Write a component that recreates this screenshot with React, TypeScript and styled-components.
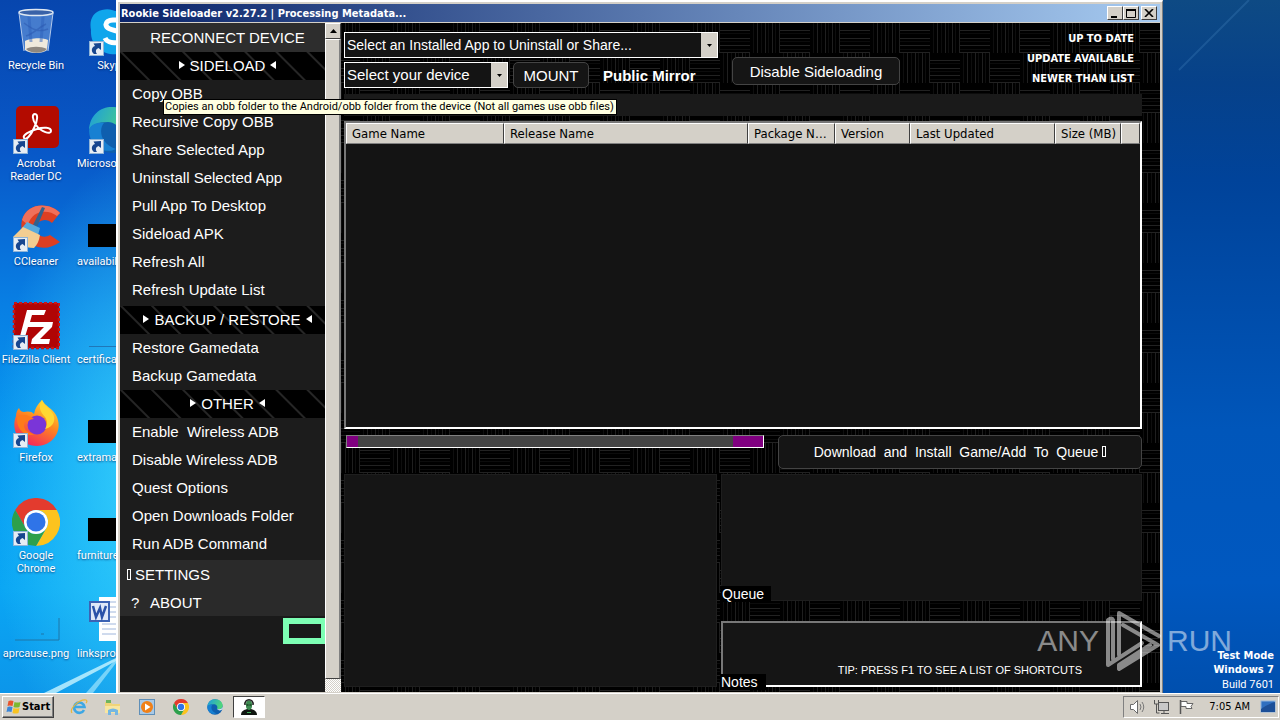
import React from 'react';
import styled, { createGlobalStyle } from 'styled-components';

const UI = '"DejaVu Sans Condensed", "DejaVu Sans", sans-serif';
const SMALL = 'Roboto, "Liberation Sans", sans-serif';
const SANS = '"Liberation Sans", Arial, sans-serif';
const FACE = '#d4d0c8';

const Global = createGlobalStyle`
  *, *::before, *::after { box-sizing: border-box; }
  body { margin: 0; }
  button, select, input { font: inherit; color: inherit; margin: 0; padding: 0; border-radius: 0; }
`;

/* ---------- desktop ---------- */

const Screen = styled.div`
  display: flex;
  flex-direction: column;
  min-height: 100vh;
  font-family: ${UI};
  font-size: 11px;
  color: #fff;
`;

const Desktop = styled.div`
  flex: 1;
  display: grid;
  grid-template-columns: 116px minmax(0, 1fr) 117px;
  position: relative;
`;

const LeftWall = styled.div`
  position: relative;
  overflow: hidden;
  background:
    radial-gradient(ellipse 160px 330px at 150px 480px, rgba(70, 225, 255, 0.75), rgba(40, 190, 255, 0) 100%),
    linear-gradient(#0746ae 0, #0858c8 22%, #087fe4 44%, #079cf2 66%, #0aa6f4 85%, #0c96ea 100%);
`;

const RightWall = styled.div`
  position: relative;
  display: flex;
  flex-direction: column;
  background: linear-gradient(#0e4a84 0, #06418a 12%, #00439a 26%, #0056ba 62%, #0058c0 84%, #004fae 100%);
`;

const Rays = styled.svg`
  position: absolute;
  left: 0;
  bottom: 0;
`;

const Shine = styled.svg`
  position: absolute;
  left: 0;
  top: 0;
`;

const IconGrid = styled.div`
  position: relative;
  display: grid;
  grid-template-columns: 72px 72px;
  column-gap: 4px;
  grid-auto-rows: 98px;
  grid-auto-flow: row;
`;

const DesktopItem = styled.a`
  display: flex;
  flex-direction: column;
  align-items: center;
  padding-top: 8px;
  color: #fff;
  text-decoration: none;
`;

const Picture = styled.span`
  position: relative;
  width: 48px;
  height: 48px;
  margin-bottom: 3px;
`;

const Badge = styled.svg`
  position: absolute;
  left: 1px;
  bottom: 0;
`;

const ItemLabel = styled.span<{ $start?: boolean }>`
  width: ${(p) => (p.$start ? '70px' : '72px')};
  text-align: ${(p) => (p.$start ? 'left' : 'center')};
  white-space: ${(p) => (p.$start ? 'nowrap' : 'normal')};
  font-size: 11px;
  line-height: 13px;
  font-family: ${SMALL};
  text-shadow: 0 1px 2px rgba(0, 30, 90, 0.7);
`;

const BuildInfo = styled.div`
  position: relative;
  margin-top: auto;
  padding: 0 6px 0 0;
  text-align: right;
`;

const BuildLine = styled.div<{ $bold?: boolean }>`
  font-family: ${(p) => (p.$bold ? UI : SMALL)};
  font-weight: ${(p) => (p.$bold ? 700 : 400)};
  line-height: ${(p) => (p.$bold ? '14px' : '16px')};
`;

const Watermark = styled.div`
  position: absolute;
  right: 48px;
  bottom: 20px;
  display: flex;
  align-items: center;
  gap: 5px;
  color: #fff;
  opacity: 0.5;
  font-family: ${SANS};
  font-size: 30px;
  line-height: 64px;
  pointer-events: none;
`;

/* ---------- window ---------- */

const Window = styled.div`
  position: relative;
  display: flex;
  flex-direction: column;
  padding: 2px 2px 1px 2px;
  border: solid;
  border-width: 2px 1px 0 2px;
  border-color: #fff #808080 #808080 #fff;
  background: ${FACE};
`;

const TitleBar = styled.div`
  display: flex;
  align-items: center;
  height: 18px;
  margin-bottom: 1px;
  padding: 0 3px 0 1px;
  background: linear-gradient(90deg, #0a246a, #a6caf0);
  font-weight: 700;
`;

const TitleText = styled.span`
  flex: 1;
  white-space: nowrap;
`;

const TitleButton = styled.button<{ $gap?: boolean }>`
  width: 16px;
  height: 14px;
  margin-left: ${(p) => (p.$gap ? '2px' : '0')};
  border: 1px solid;
  border-color: #fff #404040 #404040 #fff;
  background: ${FACE};
  display: grid;
  place-items: center;
`;

const Client = styled.div`
  flex: 1;
  display: flex;
  background: #000;
`;

const Sidebar = styled.nav`
  width: 205px;
  display: flex;
  flex-direction: column;
  background: #1a1a1a;
  font-family: ${SANS};
  font-size: 15px;
`;

const Reconnect = styled.button`
  height: 29px;
  padding-left: 10px;
  border: 0;
  background: #2d2d2d;
`;

const SectionButton = styled.button`
  height: 28px;
  border: 0;
  display: flex;
  align-items: center;
  justify-content: center;
  gap: 5px;
  padding: 0 0 2px 10px;
  background: repeating-linear-gradient(45deg, #000 0, #000 19px, #262626 20px, #262626 21px, #000 22px);
`;

const SubMenu = styled.div<{ $tail?: boolean }>`
  display: flex;
  flex-direction: column;
  padding-bottom: ${(p) => (p.$tail ? '2px' : '0')};
  background: #1c1c1c;
`;

const MenuButton = styled.button`
  height: 28px;
  padding: 0 0 2px 12px;
  border: 0;
  background: none;
  text-align: left;
  white-space: pre;
`;

const FooterButton = styled.button`
  height: 28px;
  padding-left: 7px;
  border: 0;
  background: #2a2a2a;
  display: flex;
  align-items: center;
`;

const FooterMark = styled.span<{ $wide?: boolean }>`
  width: ${(p) => (p.$wide ? '23px' : '8px')};
  padding-left: ${(p) => (p.$wide ? '4px' : '0')};
  display: inline-flex;
`;

const MissingGlyph = styled.span`
  display: inline-block;
  width: 4px;
  height: 11px;
  border: 1px solid #fff;
`;

const GreenBox = styled.div`
  align-self: flex-end;
  width: 42px;
  height: 26px;
  margin-top: 2px;
  border: 6px solid #7dffb4;
  border-right-width: 4px;
`;

const Scrollbar = styled.div`
  width: 16px;
  display: flex;
  flex-direction: column;
  background: repeating-conic-gradient(#fff 0 25%, #d4d0c8 0 50%) 0 0 / 2px 2px;
`;

const ScrollButton = styled.button`
  height: 16px;
  border: 1px solid;
  border-color: #fff #404040 #404040 #fff;
  background: ${FACE};
  display: grid;
  place-items: center;
`;

const Thumb = styled.div`
  flex: 1;
  margin-bottom: 13px;
  border: solid;
  border-width: 1px 2px 1px 1px;
  border-color: #fff #808080 #404040 #fff;
  background: ${FACE};
`;

const Main = styled.main`
  position: relative;
  flex: 1;
  min-width: 0;
  padding: 0 18px 5px 3px;
  display: flex;
  flex-direction: column;
  font-family: ${SANS};
  font-size: 15px;
`;

const WeaveSvg = styled.svg`
  position: absolute;
  inset: 0;
  width: 100%;
  height: 100%;
`;

const TopArea = styled.div`
  position: relative;
  display: flex;
  height: 71px;
`;

const Pickers = styled.div`
  width: 374px;
  padding-top: 9px;
  display: flex;
  flex-direction: column;
  gap: 4px;
`;

const PickerRow = styled.div`
  display: flex;
  align-items: center;
`;

const Combo = styled.div<{ $narrow?: boolean }>`
  position: relative;
  width: ${(p) => (p.$narrow ? '164px' : '100%')};
  height: 26px;
`;

const Select = styled.select<{ $small?: boolean }>`
  appearance: none;
  width: 100%;
  height: 100%;
  padding: 0 18px 1px 2px;
  border: 1px solid #fff;
  background: #141414;
  color: #fff;
  font-size: ${(p) => (p.$small ? '14px' : '15px')};
`;

const ComboArrow = styled.span`
  position: absolute;
  right: 1px;
  top: 1px;
  bottom: 1px;
  width: 16px;
  display: grid;
  place-items: center;
  background: ${FACE};
  pointer-events: none;
`;

const DarkButton = styled.button<{ $w?: number; $h: number; $small?: boolean }>`
  width: ${(p) => (p.$w ? `${p.$w}px` : 'auto')};
  height: ${(p) => p.$h}px;
  border: 1px solid #444;
  border-radius: 5px;
  background: #151515;
  font-size: ${(p) => (p.$small ? '14px' : '15px')};
  white-space: pre;
`;

const MountWrap = styled.div`
  margin-left: 5px;
  display: flex;
`;

const Mirror = styled.span`
  margin-left: 14px;
  font-weight: 700;
`;

const SideloadToggle = styled.div`
  padding: 34px 0 0 14px;
`;

const StatusList = styled.ul`
  list-style: none;
  margin: 0 0 0 auto;
  padding: 6px 8px 0 0;
  text-align: right;
  font-family: ${UI};
  font-weight: 700;
  font-size: 11px;
  line-height: 20px;
`;

const SearchBox = styled.input`
  position: relative;
  width: 100%;
  height: 22px;
  border: 0;
  background: #1a1a1a;
`;

const ListFrame = styled.div`
  position: relative;
  flex: 1;
  min-height: 120px;
  margin-top: 5px;
  border: solid;
  border-width: 2px;
  border-color: #777 #fff #fff #777;
  background: #141414;
`;

const GameTable = styled.table`
  width: 100%;
  table-layout: fixed;
  border-collapse: separate;
  border-spacing: 0;
  font-family: ${UI};
  font-size: 13px;
  color: #000;
`;

const HeadCell = styled.th<{ $w?: number }>`
  width: ${(p) => (p.$w ? `${p.$w}px` : 'auto')};
  height: 21px;
  padding: 1px 2px 0 5px;
  border: 1px solid;
  border-color: #fff #404040 #808080 #fff;
  background: ${FACE};
  font-weight: 400;
  line-height: 16px;
  text-align: left;
  white-space: nowrap;
  overflow: hidden;
  text-overflow: ellipsis;
`;

const ActionRow = styled.div`
  position: relative;
  display: grid;
  grid-template-columns: 418fr 364fr;
  column-gap: 14px;
  margin-top: 6px;
  padding-left: 2px;
`;

const Progress = styled.div`
  height: 13px;
  border: 1px solid;
  border-color: #808080 #fff #fff #808080;
  background: #444;
  display: flex;
  justify-content: space-between;
`;

const Chunk = styled.span<{ $w: number }>`
  width: ${(p) => p.$w}px;
  background: #800080;
`;

const Lower = styled.div`
  position: relative;
  display: grid;
  grid-template-columns: 373fr 421fr;
  column-gap: 4px;
  height: 213px;
  margin-top: 5px;
`;

const Pane = styled.div`
  background: #151515;
  border: 1px solid #1e1e1e;
`;

const RightPanes = styled.div`
  display: flex;
  flex-direction: column;
  gap: 20px;
`;

const QueuePane = styled(Pane)`
  flex: 1;
  display: flex;
  align-items: flex-end;
`;

const NotesPane = styled.div`
  height: 66px;
  display: flex;
  align-items: flex-end;
  background: #151515;
  border: solid;
  border-width: 2px;
  border-color: #777 #fff #fff #777;
`;

const PaneTag = styled.span<{ $low?: boolean }>`
  position: relative;
  left: ${(p) => (p.$low ? '-3px' : '-1px')};
  bottom: ${(p) => (p.$low ? '-5px' : '-2px')};
  width: ${(p) => (p.$low ? '46px' : '50px')};
  padding-left: 1px;
  background: #000;
  font-size: 14px;
  line-height: 16px;
`;

const Tip = styled.p`
  flex: 1;
  margin: 0;
  padding: 0 58px 8px 0;
  text-align: right;
  font-size: 11px;
  line-height: 14px;
`;

const Tooltip = styled.div`
  position: absolute;
  left: 45px;
  top: 97px;
  padding: 0 2px 0 1px;
  border: 1px solid #000;
  background: #ffffe1;
  color: #000;
  font-family: ${SMALL};
  font-size: 11px;
  line-height: 14px;
  white-space: nowrap;
`;

/* ---------- taskbar ---------- */

const Taskbar = styled.footer`
  height: 27px;
  padding: 1px 1px 2px 2px;
  border-top: 1px solid #fff;
  background: ${FACE};
  display: flex;
  align-items: center;
  color: #000;
`;

const StartButton = styled.button`
  width: 52px;
  height: 22px;
  padding: 0 2px;
  border: 1px solid;
  border-color: #fff #404040 #404040 #fff;
  box-shadow: inset -1px -1px #808080;
  background: ${FACE};
  display: flex;
  align-items: center;
  font-weight: 700;
`;

const QuickLaunch = styled.div`
  display: flex;
  gap: 16px;
  padding-left: 16px;
`;

const LaunchButton = styled.button`
  width: 18px;
  height: 18px;
  border: 0;
  background: none;
  display: grid;
  place-items: center;
`;

const RunningApp = styled.button`
  width: 32px;
  height: 22px;
  margin-left: 9px;
  border: 1px solid;
  border-color: #404040 #fff #fff #404040;
  background: #fff;
  display: grid;
  place-items: center;
`;

const Tray = styled.div`
  margin-left: auto;
  height: 22px;
  padding: 0 2px 0 5px;
  border: 1px solid;
  border-color: #808080 #fff #fff #808080;
  display: flex;
  align-items: center;
  gap: 6px;
`;

const Clock = styled.time`
  margin: 0 4px 0 8px;
`;

/* ---------- drawings ---------- */

type Size = { s?: number };

const ShortcutBadge = () => (
  <Badge width="15" height="15" viewBox="0 0 15 15">
    <rect x="0.5" y="0.5" width="14" height="14" fill="#e6edf4" stroke="#8fb4d8" />
    <path d="M5 13C2 11 2 6 6 5L4.500 2.500 12 2v7L9.500 7C7 8 6 10 8 13z" fill="#17468f" />
  </Badge>
);

const RecycleBin = () => (
  <svg width="48" height="48" viewBox="0 0 48 48">
    <path d="M7 4 12 42c5 4 20 4 24 0L41 4z" fill="#6f9fe0" fillOpacity="0.6" />
    <path d="M13 33c4-3 18-4 23-1l-1 10c-5 4-17 4-22 0z" fill="#efe9dc" />
    <path d="M14 41c5-3 15-3 21 0-5 5-16 5-21 0z" fill="#8f8880" />
    <path d="M17 9l2 25M31 9l-2 25" stroke="#2f62bc" strokeWidth="3" opacity="0.5" />
    <path d="M12 15c8 6 14 10 24 6M14 28c7-2 12-8 20-12" fill="none" stroke="#2a56ae" strokeWidth="1.500" opacity="0.5" />
    <ellipse cx="24" cy="4.500" rx="17" ry="3" fill="#3a62a8" stroke="#dfe8f2" strokeWidth="1.500" />
    <path d="M7 5l5 38M41 5l-5 38" stroke="#b4caec" strokeWidth="1" />
  </svg>
);

const Acrobat = () => (
  <svg width="48" height="48" viewBox="0 0 48 48">
    <rect x="4" y="0" width="43" height="42" rx="5" fill="#b30b00" />
    <path d="M12 32c-2-3 6-7 13-9 6-2 14-2 14 2s-10 1-15-6c-4-6-4-11-1-11s3 6-1 14c-3 7-8 13-10 10z" fill="none" stroke="#fff" strokeWidth="2" />
  </svg>
);

const CCleaner = () => (
  <svg width="48" height="48" viewBox="0 0 48 48">
    <path d="M48 9C38-2 15-2 10 16c-5 20 18 37 38 22L38 31c-8 5-16-2-14-9 3-7 11-8 16-3z" fill="#dd3f22" />
    <path d="M48 9C38-2 15-2 10 16l6 5C20 6 36 5 45 12z" fill="#f0705a" />
    <path d="M30 3 21 21l4 2 8-19z" fill="#30628f" />
    <path d="M15 18l13 6-2 7-16-7z" fill="#58a9dc" />
    <path d="M11 23l17 8c-1 6-3 10-6 13C12 44 5 40 1 33z" fill="#f3cd91" />
  </svg>
);

const FileZilla = () => (
  <svg width="48" height="48" viewBox="0 0 48 48">
    <rect x="2" y="1" width="45" height="45" fill="#b00505" stroke="#c81616" strokeWidth="2.500" strokeDasharray="3 2" />
    <path d="M15 8h19l-2 5H20l-2 7h10l-1 5H16l-4 13H7z" fill="#fff" />
    <path d="M25 20h16l-1 5-12 12h10l-1 5H19l1-5 12-12h-8z" fill="#fff" />
  </svg>
);

const Firefox = () => (
  <svg width="48" height="48" viewBox="0 0 48 48">
    <defs>
      <linearGradient id="ffx" x1="0.800" y1="0" x2="0.300" y2="1">
        <stop offset="0" stopColor="#ffe23d" />
        <stop offset="0.450" stopColor="#ff8a1e" />
        <stop offset="1" stopColor="#f4225f" />
      </linearGradient>
    </defs>
    <path d="M30 0c3 6 10 8 14 15 8 15-3 31-19 31S-2 32 4 16c0-3 1-6 3-8 1 3 3 4 5 4 3-1 8-1 10 2 1-6 4-10 8-14z" fill="url(#ffx)" />
    <circle cx="25" cy="25" r="9.500" fill="#7a35d8" />
    <path d="M5 17c5-4 12-2 17 2-5 0-5 3-9 3-3 6 2 12 10 12-11 4-19-6-18-17z" fill="#ff7a1a" />
    <path d="M30 0c-4 6-2 12 3 17 3 4 2 9 0 12 9-2 11-10 8-15-3-6-9-8-11-14z" fill="#ffd833" />
  </svg>
);

const Chrome = ({ s = 48 }: Size) => (
  <svg width={s} height={s} viewBox="0 0 48 48">
    <path d="M3.200 12A24 24 0 0 1 44.800 12H24A12 12 0 0 0 13.600 30Z" fill="#e33b2e" />
    <path d="M44.800 12A24 24 0 0 1 24 48L34.400 30A12 12 0 0 0 24 12Z" fill="#fcc31e" />
    <path d="M24 48A24 24 0 0 1 3.200 12L13.600 30A12 12 0 0 0 34.400 30Z" fill="#2da04c" />
    <circle cx="24" cy="24" r="12" fill="#fff" />
    <circle cx="24" cy="24" r="9.500" fill="#2f74e8" />
  </svg>
);

const Edge = ({ s = 48 }: Size) => (
  <svg width={s} height={s} viewBox="0 0 48 48">
    <defs>
      <linearGradient id="edg" x1="0" y1="0" x2="1" y2="0.300">
        <stop offset="0" stopColor="#1c9be0" />
        <stop offset="1" stopColor="#4fd67c" />
      </linearGradient>
    </defs>
    <circle cx="24" cy="24" r="23" fill="#0f5fae" />
    <path d="M1 24C2 9 12 1 24 1c14 0 23 9 23 19 0 8-8 12-17 10 4-8-3-14-10-14C10 16 3 19 1 24z" fill="url(#edg)" />
    <path d="M1 24c2-6 8-8 15-7-5 5-5 20 12 26-12 6-27-3-27-19z" fill="#1780d2" />
    <path d="M30 30c9 3 16-1 17-8v8c-5 6-13 5-17 0z" fill="#d4e8f0" />
  </svg>
);

const Skype = () => (
  <svg width="48" height="48" viewBox="0 0 48 48">
    <path d="M14 2c6-2 11 0 13 1 12 0 20 10 20 21 2 8-2 22-16 22C15 48 2 38 3 22 1 12 5 4 14 2z" fill="#10a6ec" />
    <path d="M35 16c-3-6-18-5-17 1 1 7 18 4 18 12 0 7-16 8-19 1" fill="none" stroke="#fff" strokeWidth="5" />
  </svg>
);

const WordDoc = () => (
  <svg width="48" height="48" viewBox="0 0 48 48">
    <rect x="11" y="1" width="34" height="44" fill="#fff" />
    <path d="M22 6h20M22 11h20M22 16h20M22 21h20M14 28h28M14 33h28M14 38h28" stroke="#9fb6dc" />
    <rect x="2" y="6" width="19" height="19" fill="#dfe8f8" stroke="#3c63b4" strokeWidth="2" />
    <path d="M5 10l3 11 4-9 2 9 4-11" fill="none" stroke="#2a52a8" strokeWidth="2.500" />
  </svg>
);

const BlackFile = () => (
  <svg width="48" height="48" viewBox="0 0 48 48">
    <rect y="20" width="48" height="23" fill="#000" />
  </svg>
);

const ThinImage = () => (
  <svg width="48" height="48" viewBox="0 0 48 48">
    <path d="M3 44h44V22" fill="none" stroke="#1f77a8" />
    <path d="M29 38h3" stroke="#1f77a8" />
  </svg>
);

const ThinLine = () => (
  <svg width="48" height="48" viewBox="0 0 48 48">
    <path d="M1 44.500h46" stroke="#1f77b8" />
  </svg>
);

const Weave = () => (
  <WeaveSvg aria-hidden="true">
    <defs>
      <g id="weave-h">
        <path d="M0 7.500h30M0 15.500h30M0 22.500h30M0 29.500h30" stroke="#222" />
        <path d="M0 10.500h30M0 18.500h30M0 26.500h30" stroke="#0c0c0c" />
      </g>
      <g id="weave-v">
        <path d="M7.500 0v30M15.500 0v30M22.500 0v30M29.500 0v30" stroke="#1f1f1f" />
        <path d="M3.500 0v30M11.500 0v30M18.500 0v30M25.500 0v30" stroke="#0e0e0e" />
      </g>
      <pattern id="weave" x="19" y="0" width="60" height="60" patternUnits="userSpaceOnUse">
        <use href="#weave-h" />
        <use href="#weave-v" x="30" />
        <use href="#weave-v" y="30" />
        <use href="#weave-h" x="30" y="30" />
      </pattern>
    </defs>
    <rect width="100%" height="100%" fill="url(#weave)" />
  </WeaveSvg>
);

const Tri = ({ d }: { d: string }) => (
  <svg width="6" height="8" viewBox="0 0 6 8"><path d={d} fill="#fff" /></svg>
);

const DownArrow = () => (
  <svg width="5" height="3" viewBox="0 0 5 3"><path d="M0 0h5L2.500 3z" fill="#000" /></svg>
);

const WinFlag = () => (
  <svg width="17" height="16" viewBox="0 0 16 16">
    <path d="M3 2q2-1 5 0L7 7Q4 6 2 7z" fill="#e8542c" />
    <path d="M9 3q3 1 6 0l-1 5q-3 1-6 0z" fill="#7cb82f" />
    <path d="M2 8q2-1 5 0l-1 5q-3-1-5 0z" fill="#3a86d8" />
    <path d="M8 9q3 1 6 0l-1 5q-3 1-6 0z" fill="#f8c320" />
  </svg>
);

const InternetExplorer = () => (
  <svg width="18" height="18" viewBox="0 0 18 18">
    <path d="M14 12a5.200 5.200 0 1 1 .5-3H5" fill="none" stroke="#3da7e4" strokeWidth="2.600" />
    <path d="M2 15C-1 11 9 1 16 2c2 1 0 3 0 3" fill="none" stroke="#e8b73a" strokeWidth="1.200" />
  </svg>
);

const Explorer = () => (
  <svg width="18" height="18" viewBox="0 0 18 18">
    <path d="M1 4h6l1 2h8v9H1z" fill="#f0d478" />
    <path d="M2 2h5v3H2z" fill="#6fb45c" />
    <path d="M1 8h15v7H1z" fill="#f8e6a0" />
    <path d="M4 17v-5q5-3 10 0v5h-3v-3H7v3z" fill="#74b7e2" />
  </svg>
);

const MediaPlayer = () => (
  <svg width="18" height="18" viewBox="0 0 18 18">
    <rect x="1.500" y="1.500" width="15" height="15" fill="#a9c9e6" stroke="#5f8fb8" />
    <circle cx="9" cy="9" r="6" fill="#f08018" />
    <path d="M7 5.500 12.500 9 7 12.500z" fill="#fff" />
  </svg>
);

const RookieIcon = () => (
  <svg width="18" height="18" viewBox="0 0 18 18">
    <path d="M1 17c0-4 3-5 6-6h4c3 1 6 2 6 6z" fill="#101510" />
    <path d="M6 6c0-5 6-5 6 0v3c-1 4-5 4-6 0z" fill="#3d8a50" />
    <path d="M5 7C4 0 14 0 13 7" fill="none" stroke="#222" strokeWidth="1.500" />
    <path d="M6.500 7h2M9.500 7h2" stroke="#0a240f" />
    <path d="M7 14.500h4" stroke="#3fae58" />
  </svg>
);

const Speaker = () => (
  <svg width="18" height="16" viewBox="0 0 18 16">
    <path d="M1.500 5.500h3l4-4v13l-4-4h-3z" fill="#fff" stroke="#6b6b6b" />
    <path d="M11 5q2 3 0 6M13 3q3.500 5 0 10" fill="none" stroke="#777" />
  </svg>
);

const Network = () => (
  <svg width="18" height="16" viewBox="0 0 18 16">
    <rect x="5.500" y="3.500" width="10" height="8" fill="#c8c8c8" stroke="#555" />
    <path d="M8 14.500h8M11 12v2" stroke="#555" />
    <path d="M1.500 1v4h4V1M3.500 5v9h3" fill="none" stroke="#555" />
  </svg>
);

const Flag = () => (
  <svg width="18" height="16" viewBox="0 0 18 16">
    <path d="M3.500 1v14" stroke="#555" strokeWidth="1.500" />
    <path d="M4 2.500h6v2h6l-2 3 1 2H9v-2H4z" fill="#fff" stroke="#666" />
  </svg>
);

const ShowDesktop = () => (
  <svg width="16" height="14" viewBox="0 0 16 14">
    <rect x="1" y="1" width="14" height="11" fill="#2f6fc0" stroke="#8fb4dc" />
    <path d="M1 9q7-5 14-7v10H1z" fill="#1c4f98" />
  </svg>
);

/* ---------- data ---------- */

type Item = { name: string; art: React.ReactNode; shortcut?: boolean; start?: boolean };

const desktopItems: Item[] = [
  { name: 'Recycle Bin', art: <RecycleBin /> },
  { name: 'Skype', art: <Skype />, shortcut: true },
  { name: 'Acrobat Reader DC', art: <Acrobat />, shortcut: true },
  { name: 'Microsoft', art: <Edge />, shortcut: true, start: true },
  { name: 'CCleaner', art: <CCleaner />, shortcut: true },
  { name: 'availabil', art: <BlackFile />, start: true },
  { name: 'FileZilla Client', art: <FileZilla />, shortcut: true },
  { name: 'certifica', art: <ThinLine />, start: true },
  { name: 'Firefox', art: <Firefox />, shortcut: true },
  { name: 'extrama', art: <BlackFile />, start: true },
  { name: 'Google Chrome', art: <Chrome />, shortcut: true },
  { name: 'furniture', art: <BlackFile />, start: true },
  { name: 'aprcause.png', art: <ThinImage /> },
  { name: 'linksprov', art: <WordDoc />, start: true },
];

const sections = [
  {
    title: 'SIDELOAD',
    tail: true,
    items: ['Copy OBB', 'Recursive Copy OBB', 'Share Selected App', 'Uninstall Selected App', 'Pull App To Desktop', 'Sideload APK', 'Refresh All', 'Refresh Update List'],
  },
  { title: 'BACKUP / RESTORE', tail: false, items: ['Restore Gamedata', 'Backup Gamedata'] },
  {
    title: 'OTHER',
    tail: true,
    items: ['Enable  Wireless ADB', 'Disable Wireless ADB', 'Quest Options', 'Open Downloads Folder', 'Run ADB Command'],
  },
];

const columns = [
  { name: 'Game Name', w: 158 },
  { name: 'Release Name', w: 244 },
  { name: 'Package Name', w: 87 },
  { name: 'Version', w: 75 },
  { name: 'Last Updated', w: 145 },
  { name: 'Size (MB)', w: 66 },
  { name: '' },
];

export default function App() {
  return (
    <Screen>
      <Global />
      <Desktop>
        <LeftWall>
          <Rays width="116" height="40" viewBox="0 0 116 40">
            <path d="M44 40 116 5v3L56 40z" fill="#c8f4ff" opacity="0.800" />
            <path d="M86 40 116 6v4L93 40z" fill="#b4eeff" opacity="0.600" />
          </Rays>
          <IconGrid>
            {desktopItems.map((it) => (
              <DesktopItem href="#" key={it.name}>
                <Picture>
                  {it.art}
                  {it.shortcut && <ShortcutBadge />}
                </Picture>
                <ItemLabel $start={it.start}>{it.name}</ItemLabel>
              </DesktopItem>
            ))}
          </IconGrid>
        </LeftWall>

        <Window>
          <TitleBar>
            <TitleText>Rookie Sideloader v2.27.2 | Processing Metadata...</TitleText>
            <TitleButton aria-label="Minimize">
              <svg width="10" height="9" viewBox="0 0 10 9"><path d="M1 7h6v2H1z" /></svg>
            </TitleButton>
            <TitleButton aria-label="Maximize">
              <svg width="10" height="9" viewBox="0 0 10 9"><path d="M.5 1h9M.5 0v8.500h9V0" fill="none" stroke="#000" /><path d="M0 0h10v2H0z" /></svg>
            </TitleButton>
            <TitleButton aria-label="Close" $gap>
              <svg width="10" height="8" viewBox="0 0 10 8"><path d="M1 0l8 8M9 0 1 8" stroke="#000" strokeWidth="1.600" /></svg>
            </TitleButton>
          </TitleBar>

          <Client>
            <Sidebar>
              <Reconnect>RECONNECT DEVICE</Reconnect>
              {sections.map((sec) => (
                <React.Fragment key={sec.title}>
                  <SectionButton>
                    <Tri d="M0 0l6 4-6 4z" />
                    {sec.title}
                    <Tri d="M6 0 0 4l6 4z" />
                  </SectionButton>
                  <SubMenu $tail={sec.tail}>
                    {sec.items.map((t) => (
                      <MenuButton key={t}>{t}</MenuButton>
                    ))}
                  </SubMenu>
                </React.Fragment>
              ))}
              <FooterButton><FooterMark><MissingGlyph /></FooterMark>SETTINGS</FooterButton>
              <FooterButton><FooterMark $wide>?</FooterMark>ABOUT</FooterButton>
              <GreenBox />
            </Sidebar>
            <Scrollbar>
              <ScrollButton aria-label="Scroll up">
                <svg width="7" height="4" viewBox="0 0 7 4"><path d="M0 4h7L3.500 0z" /></svg>
              </ScrollButton>
              <Thumb />
            </Scrollbar>

            <Main>
              <Weave />
              <TopArea>
                <Pickers>
                  <Combo>
                    <Select $small aria-label="Installed app"><option>Select an Installed App to Uninstall or Share...</option></Select>
                    <ComboArrow><DownArrow /></ComboArrow>
                  </Combo>
                  <PickerRow>
                    <Combo $narrow>
                      <Select aria-label="Device"><option>Select your device</option></Select>
                      <ComboArrow><DownArrow /></ComboArrow>
                    </Combo>
                    <MountWrap><DarkButton $w={76} $h={26}>MOUNT</DarkButton></MountWrap>
                    <Mirror>Public Mirror</Mirror>
                  </PickerRow>
                </Pickers>
                <SideloadToggle><DarkButton $w={168} $h={28}>Disable Sideloading</DarkButton></SideloadToggle>
                <StatusList>
                  <li>UP TO DATE</li>
                  <li>UPDATE AVAILABLE</li>
                  <li>NEWER THAN LIST</li>
                </StatusList>
              </TopArea>
              <SearchBox type="text" aria-label="Search" />
              <ListFrame>
                <GameTable>
                  <thead>
                    <tr>
                      {columns.map((c) => (
                        <HeadCell key={c.name} $w={c.w}>{c.name}</HeadCell>
                      ))}
                    </tr>
                  </thead>
                </GameTable>
              </ListFrame>
              <ActionRow>
                <Progress role="progressbar" aria-label="Processing metadata">
                  <Chunk $w={11} />
                  <Chunk $w={30} />
                </Progress>
                <DarkButton $h={34} $small>Download  and  Install  Game/Add  To  Queue <MissingGlyph /></DarkButton>
              </ActionRow>
              <Lower>
                <Pane />
                <RightPanes>
                  <QueuePane><PaneTag>Queue</PaneTag></QueuePane>
                  <NotesPane>
                    <PaneTag $low>Notes</PaneTag>
                    <Tip>TIP: PRESS F1 TO SEE A LIST OF SHORTCUTS</Tip>
                  </NotesPane>
                </RightPanes>
              </Lower>
            </Main>
          </Client>
          <Tooltip role="tooltip">
            Copies an obb folder to the Android/obb folder from the device (Not all games use obb files)
          </Tooltip>
        </Window>

        <RightWall>
          <Shine width="117" height="120" viewBox="0 0 117 120">
            <path d="M16 70 86 0" stroke="#4f8fc8" strokeWidth="2" opacity="0.250" />
          </Shine>
          <BuildInfo>
            <BuildLine $bold>Test Mode</BuildLine>
            <BuildLine $bold>Windows 7</BuildLine>
            <BuildLine>Build 7601</BuildLine>
          </BuildInfo>
        </RightWall>

        <Watermark>
          <span>ANY</span>
          <svg width="58" height="64" viewBox="0 0 58 64">
            <g fill="none" stroke="#fff" strokeWidth="4" strokeLinejoin="round" strokeLinecap="round">
              <path d="M9 50V11Q8 8 4 11V56L38 34" />
              <path d="M15 46V4L55 27" />
              <path d="M19 16 54 36 15 60 V56 L46 36" />
            </g>
          </svg>
          <span>RUN</span>
        </Watermark>
      </Desktop>

      <Taskbar>
        <StartButton><WinFlag />Start</StartButton>
        <QuickLaunch>
          <LaunchButton aria-label="Internet Explorer"><InternetExplorer /></LaunchButton>
          <LaunchButton aria-label="Explorer"><Explorer /></LaunchButton>
          <LaunchButton aria-label="Media Player"><MediaPlayer /></LaunchButton>
          <LaunchButton aria-label="Chrome"><Chrome s={16} /></LaunchButton>
          <LaunchButton aria-label="Edge"><Edge s={16} /></LaunchButton>
        </QuickLaunch>
        <RunningApp aria-label="Rookie Sideloader"><RookieIcon /></RunningApp>
        <Tray>
          <Speaker />
          <Network />
          <Flag />
          <Clock>7:05 AM</Clock>
          <ShowDesktop />
        </Tray>
      </Taskbar>
    </Screen>
  );
}
